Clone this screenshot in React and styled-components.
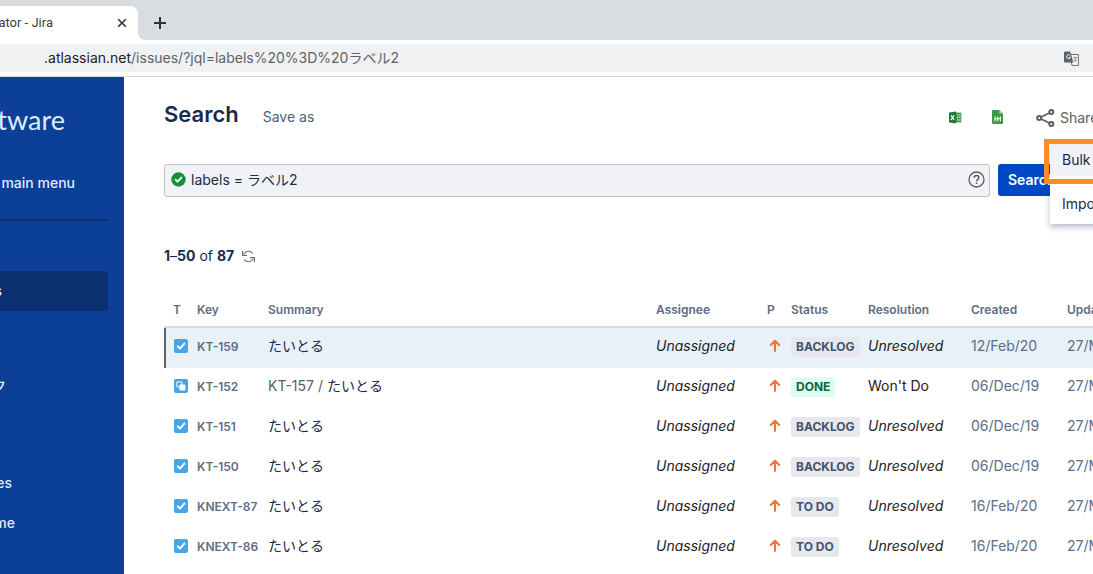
import React from "react";
import styled, { createGlobalStyle, css } from "styled-components";

const GlobalStyle = createGlobalStyle`
  * {
    box-sizing: border-box;
  }

  body {
    margin: 0;
    background-color: #ffffff;
    color: #172b4d;
    font-family: Inter, "Noto Sans CJK JP", sans-serif;
    font-size: 14px;
    line-height: 20px;
    overflow: hidden;
  }

  button,
  input {
    font: inherit;
  }

  svg {
    display: block;
    flex: none;
  }
`;

const Browser = styled.div`
  display: flex;
  flex-direction: column;
  min-height: 100vh;
  overflow: hidden;
`;

const TabStrip = styled.div`
  display: flex;
  align-items: flex-end;
  height: 40px;
  background-color: #d9dce1;
`;

const Tab = styled.div`
  position: relative;
  display: flex;
  align-items: center;
  justify-content: space-between;
  width: 138px;
  height: 34px;
  padding-right: 9px;
  background-color: #ffffff;
  border-radius: 0 8px 0 0;

  /* curved foot of the tab */
  &::after {
    content: "";
    position: absolute;
    left: 100%;
    bottom: 0;
    width: 8px;
    height: 8px;
    background: radial-gradient(circle at 100% 0, transparent 8px, #ffffff 8px);
  }
`;

const IconButton = styled.button`
  display: flex;
  align-items: center;
  justify-content: center;
  flex: none;
  width: ${(props) => props.$size || 14}px;
  height: ${(props) => props.$size || 14}px;
  padding: 0;
  border: none;
  background: none;
  color: ${(props) => props.$color || "#2f3338"};
`;

const NewTab = styled.div`
  align-self: center;
  margin: 6px 0 0 15px;
`;

// Text that runs off the left edge of the window and ends at $end
const Clipped = styled.span`
  display: flex;
  justify-content: flex-end;
  flex: none;
  width: ${(props) => props.$end}px;
  overflow: hidden;
  white-space: nowrap;
`;

const TabTitle = styled(Clipped)`
  font-family: Roboto, sans-serif;
  font-size: 13px;
  color: #3c4043;
`;

const Toolbar = styled.div`
  padding: 4px 0;
  border-bottom: 1px solid #d5d7db;
`;

const AddressBar = styled.div`
  display: flex;
  align-items: center;
  height: 28px;
  padding: 0 14px 0 44px;
  background-color: #f0f1f3;
  color: #5f6368;
`;

const Host = styled.span`
  color: #202124;
`;

const Url = styled.span`
  flex: 1;
`;

const Page = styled.div`
  display: flex;
  flex: 1;
`;

const Sidebar = styled.nav`
  flex: none;
  width: 124px;
  padding: 28px 16px 0 0;
  background-color: #0c3f98;
  color: #deebff;
  font-weight: 500;
`;

const Brand = styled(Clipped)`
  font-family: Lato, sans-serif;
  font-size: 27px;
  font-weight: 400;
  line-height: 30px;
`;

const SidebarLink = styled.a`
  display: flex;
  align-items: center;
  height: 40px;
  margin-top: ${(props) => props.$gap || 0}px;
  border-radius: 0 4px 4px 0;
  color: inherit;
  text-decoration: none;
  ${(props) =>
    props.$active &&
    css`
      background-color: #0a306f;
    `}
`;

const Divider = styled.hr`
  height: 2px;
  margin: 16px 0 50px;
  border: none;
  background-color: #0a306f;
`;

const Main = styled.main`
  flex: 1;
  min-width: 0;
  padding: 21px 0 0 40px;
`;

const Header = styled.header`
  display: flex;
  align-items: center;
  height: 32px;
`;

const Title = styled.h1`
  margin: 0;
  font-size: 22px;
  font-weight: 600;
  line-height: 32px;
`;

const PlainButton = styled.button`
  display: flex;
  align-items: center;
  gap: 5px;
  flex: none;
  padding: 0;
  border: none;
  background: none;
  color: #505f79;
`;

const SaveAs = styled(PlainButton)`
  margin: 6px auto 0 24px;
`;

const Actions = styled.div`
  position: relative;
  display: flex;
  align-items: center;
  gap: 29px;
  width: 145px;
  margin-top: 6px;
`;

const Share = styled(PlainButton)`
  margin-left: 2px;
  padding-top: 2px;
  color: #5e5e5e;
`;

const Menu = styled.ul`
  position: absolute;
  top: 38px;
  left: 102px;
  z-index: 1;
  width: 162px;
  margin: 0;
  padding: 0 0 4px;
  list-style: none;
  background-color: #ffffff;
  box-shadow: 0 3px 6px rgba(9, 30, 66, 0.3);
`;

const MenuItem = styled.li`
  height: ${(props) => (props.$active ? 32 : 44)}px;
  display: flex;
  align-items: center;
  padding-left: 12px;
  background-color: ${(props) => (props.$active ? "#f1f2f6" : "#ffffff")};

  & + & {
    padding-top: 12px;
  }
`;

const MenuButton = styled(PlainButton)`
  color: #172b4d;
`;

const Highlight = styled.div`
  position: absolute;
  top: 33px;
  left: 96px;
  z-index: 2;
  width: 178px;
  height: 45px;
  border: 5px solid #ff8b22;
`;

const SearchForm = styled.form`
  display: flex;
  gap: 8px;
  margin-top: 34px;
`;

const QueryBox = styled.div`
  display: flex;
  align-items: center;
  flex: 1;
  gap: 5px;
  height: 33px;
  padding: 0 4px 2px 6px;
  border: 1px solid #c1c1c1;
  border-radius: 3px;
  background-color: #f1f2f6;
`;

const QueryInput = styled.input`
  flex: 1;
  min-width: 0;
  padding: 0;
  border: none;
  outline: none;
  background: none;
  color: #172b4d;
`;

const SearchButton = styled.button`
  flex: none;
  width: 95px;
  height: 32px;
  padding: 0 10px;
  border: none;
  border-radius: 3px;
  background-color: #0049c4;
  color: #ffffff;
  font-weight: 600;
  text-align: left;
`;

const Count = styled.div`
  display: flex;
  align-items: center;
  gap: 7px;
  margin: 49px 0 31px;
`;

const Table = styled.table`
  width: calc(100% + 54px);
  table-layout: fixed;
  border-collapse: separate;
  border-spacing: 0;
`;

const Col = styled.col`
  width: ${(props) => props.$width}px;
`;

const Th = styled.th`
  height: 31px;
  padding: ${(props) => (props.$first ? "0 0 6px 9px" : "0 0 6px")};
  border-bottom: 2px solid #d9dde3;
  color: #5e6c84;
  font-size: 12px;
  font-weight: 600;
  line-height: 20px;
  text-align: left;
  vertical-align: bottom;
  white-space: nowrap;
`;

const Row = styled.tr`
  ${(props) =>
    props.$selected &&
    css`
      background-color: #e8f0f8;
      box-shadow: inset 2px 0 0 #5f6368;
    `}
`;

const Td = styled.td`
  height: 40px;
  padding: 0 0 4px;
  color: ${(props) => props.$color || "#172b4d"};
  white-space: nowrap;
`;

const TypeCell = styled(Td)`
  padding-left: 10px;
`;

const PriorityCell = styled(Td)`
  padding-left: 2px;
`;

const StatusCell = styled(Td)`
  padding-bottom: 2px;
`;

const KeyLink = styled.a`
  color: #5e6c84;
  font-size: 12px;
  font-weight: 600;
  text-decoration: none;
`;

const SummaryLink = styled.a`
  color: ${(props) => (props.$parent ? "#5e5e5e" : "#172b4d")};
  text-decoration: none;
`;

const Lozenge = styled.span`
  display: block;
  width: max-content;
  padding: 0 5px;
  border-radius: 3px;
  background-color: ${(props) => (props.$done ? "#dffcf0" : "#e6e8ed")};
  color: ${(props) => (props.$done ? "#0b6644" : "#42526e")};
  font-size: 12px;
  font-weight: 700;
`;

const CheckType = () => (
  <svg width="14" height="14" viewBox="0 0 14 14">
    <rect width="14" height="14" rx="2" fill="#45a5e6" />
    <path
      d="M3.8 7.4l2.2 2.2 4.3-5"
      fill="none"
      stroke="#fff"
      strokeWidth="2"
      strokeLinecap="round"
      strokeLinejoin="round"
    />
  </svg>
);

const SubtaskType = () => (
  <svg width="14" height="14" viewBox="0 0 14 14">
    <rect width="14" height="14" rx="2" fill="#45a5e6" />
    <rect
      x="2.8"
      y="2.8"
      width="5"
      height="5"
      rx="0.8"
      fill="none"
      stroke="#d5ebfa"
      strokeWidth="1.3"
    />
    <rect x="5.4" y="5.4" width="6" height="6" rx="1" fill="#fff" />
  </svg>
);

const PriorityArrow = () => (
  <svg width="12" height="14" viewBox="0 0 12 14">
    <path
      d="M6 12V2.4M1.8 6L6 1.8 10.2 6"
      fill="none"
      stroke="#ed7430"
      strokeWidth="2"
      strokeLinecap="round"
      strokeLinejoin="round"
    />
  </svg>
);

const CloseIcon = () => (
  <svg width="10" height="10" viewBox="0 0 10 10">
    <path d="M1.2 1.2l7.6 7.6M8.8 1.2L1.2 8.8" stroke="currentColor" strokeWidth="1.6" />
  </svg>
);

const PlusIcon = () => (
  <svg width="14" height="14" viewBox="0 0 14 14">
    <path d="M7 1v12M1 7h12" stroke="currentColor" strokeWidth="2" />
  </svg>
);

const TranslateIcon = () => (
  <svg width="15" height="15" viewBox="0 0 15 15">
    <path d="M6 3.5h8.4v10.9H8z" fill="#f8f8f9" stroke="#6b6f74" strokeWidth="1" />
    <path d="M1 .5h5.2l3.2 11H1a1 1 0 0 1-1-1v-9a1 1 0 0 1 1-1z" fill="#5f6368" />
    <path
      d="M6.2 4.5a2 2 0 1 0 .3 1.8H4.7"
      fill="none"
      stroke="#f0f1f3"
      strokeWidth="1"
    />
    <path
      d="M9 6.7h4.2M11 5.7v1M12.5 6.9c-.4 1.6-1.4 2.9-2.8 3.8M10 8c.6 1.2 1.4 2.1 2.6 2.8"
      fill="none"
      stroke="#6b6f74"
      strokeWidth=".8"
    />
  </svg>
);

const ExcelIcon = () => (
  <svg width="13" height="13" viewBox="0 0 13 13">
    <rect x="6" y="1.6" width="6.4" height="9.8" fill="#3d9a52" />
    <path
      d="M8 3.8h1.3M10.2 3.8h1.3M8 6.4h1.3M10.2 6.4h1.3M8 9h1.3M10.2 9h1.3"
      stroke="#d7ecdb"
      strokeWidth="1.3"
    />
    <path d="M0 1.6L7.2.4v12.2L0 11.4z" fill="#1f7a3a" />
    <path d="M2.1 4.4l3 4.4M5.1 4.4l-3 4.4" stroke="#fff" strokeWidth="1.2" />
  </svg>
);

const SheetIcon = () => (
  <svg width="12" height="14" viewBox="0 0 12 14">
    <path d="M1 0h6.4L11 3.6V13a1 1 0 0 1-1 1H1a1 1 0 0 1-1-1V1a1 1 0 0 1 1-1z" fill="#3b9a45" />
    <path d="M7.4 0v3.6H11z" fill="#a6d5aa" />
    <path d="M3 6.4v4.8M5.7 6.4v4.8M8.4 6.4v4.8M3 8.8h5.4" stroke="#fff" strokeWidth="1.1" />
  </svg>
);

const ShareIcon = () => (
  <svg width="19" height="18" viewBox="0 0 19 18" fill="none" stroke="#5e5e5e" strokeWidth="2">
    <path d="M5 8.1l8.4-4.2M5 9.9l8.4 4.2" strokeWidth="1.7" />
    <circle cx="3.2" cy="9" r="2" />
    <circle cx="15.3" cy="3" r="2" />
    <circle cx="15.3" cy="15" r="2" />
  </svg>
);

const ValidIcon = () => (
  <svg width="15" height="15" viewBox="0 0 15 15">
    <circle cx="7.5" cy="7.5" r="7.2" fill="#148f3d" />
    <path
      d="M4.6 7.6l2 2 3.8-4"
      fill="none"
      stroke="#fff"
      strokeWidth="2"
      strokeLinecap="round"
      strokeLinejoin="round"
    />
  </svg>
);

const HelpIcon = () => (
  <svg width="17" height="17" viewBox="0 0 17 17" fill="none" stroke="#5e5e5e">
    <circle cx="8.5" cy="8.5" r="7.5" strokeWidth="1.3" />
    <path
      d="M6.2 6.8c0-1.5 1-2.3 2.3-2.3s2.3.8 2.3 2.1c0 1.7-2.2 1.8-2.2 3.6"
      strokeWidth="1.5"
    />
    <path d="M8.6 11.3v1.6" strokeWidth="1.6" />
  </svg>
);

const RefreshIcon = () => (
  <svg width="13" height="13" viewBox="0 0 13 13">
    <path
      d="M2 4A5.2 5.2 0 0 1 10.8 3.4M11 9A5.2 5.2 0 0 1 2.2 9.6"
      fill="none"
      stroke="#6b6b6b"
      strokeWidth="1.1"
    />
    <path d="M.6 1v4.4H5M12.4 12V7.6H8" fill="none" stroke="#6b6b6b" strokeWidth="1.2" />
  </svg>
);

const columns = [
  { label: "T", width: 33 },
  { label: "Key", width: 71 },
  { label: "Summary" },
  { label: "Assignee", width: 111 },
  { label: "P", width: 24 },
  { label: "Status", width: 77 },
  { label: "Resolution", width: 103 },
  { label: "Created", width: 96 },
  { label: "Updated", width: 80 },
];

const issues = [
  { key: "KT-159", status: "BACKLOG", created: "12/Feb/20", selected: true },
  { key: "KT-152", parent: "KT-157", status: "DONE", resolution: "Won't Do", created: "06/Dec/19" },
  { key: "KT-151", status: "BACKLOG", created: "06/Dec/19" },
  { key: "KT-150", status: "BACKLOG", created: "06/Dec/19" },
  { key: "KNEXT-87", status: "TO DO", created: "16/Feb/20" },
  { key: "KNEXT-86", status: "TO DO", created: "16/Feb/20" },
];

const IssueRow = ({ issue }) => (
  <Row $selected={issue.selected}>
    <TypeCell>{issue.parent ? <SubtaskType /> : <CheckType />}</TypeCell>
    <Td>
      <KeyLink href="#">{issue.key}</KeyLink>
    </Td>
    <Td>
      {issue.parent && (
        <SummaryLink href="#" $parent>
          {issue.parent} /{" "}
        </SummaryLink>
      )}
      <SummaryLink href="#">たいとる</SummaryLink>
    </Td>
    <Td $color="#222222">
      <em>Unassigned</em>
    </Td>
    <PriorityCell>
      <PriorityArrow />
    </PriorityCell>
    <StatusCell>
      <Lozenge $done={issue.status === "DONE"}>{issue.status}</Lozenge>
    </StatusCell>
    <Td $color="#222222">{issue.resolution || <em>Unresolved</em>}</Td>
    <Td $color="#5e6c84">{issue.created}</Td>
    <Td $color="#5e6c84">27/Mar/20</Td>
  </Row>
);

const App = () => {
  return (
    <Browser>
      <GlobalStyle />
      <TabStrip>
        <Tab>
          <TabTitle $end={53}>ator - Jira</TabTitle>
          <IconButton aria-label="Close tab">
            <CloseIcon />
          </IconButton>
        </Tab>
        <NewTab>
          <IconButton aria-label="New tab">
            <PlusIcon />
          </IconButton>
        </NewTab>
      </TabStrip>
      <Toolbar>
        <AddressBar>
          <Url>
            <Host>.atlassian.net</Host>/issues/?jql=labels%20%3D%20ラベル2
          </Url>
          <IconButton aria-label="Translate" $size={15}>
            <TranslateIcon />
          </IconButton>
        </AddressBar>
      </Toolbar>
      <Page>
        <Sidebar>
          <Brand $end={65}>tware</Brand>
          <SidebarLink href="#" $gap={28}>
            <Clipped $end={75}>main menu</Clipped>
          </SidebarLink>
          <Divider />
          <SidebarLink href="#" $active>
            <Clipped $end={2}>s</Clipped>
          </SidebarLink>
          <SidebarLink href="#" $gap={55}>
            <Clipped $end={6}>ク</Clipped>
          </SidebarLink>
          <SidebarLink href="#" $gap={57}>
            <Clipped $end={12}>es</Clipped>
          </SidebarLink>
          <SidebarLink href="#">
            <Clipped $end={15}>me</Clipped>
          </SidebarLink>
        </Sidebar>
        <Main>
          <Header>
            <Title>Search</Title>
            <SaveAs>Save as</SaveAs>
            <Actions>
              <IconButton aria-label="Open in Excel">
                <ExcelIcon />
              </IconButton>
              <IconButton aria-label="Open in Sheets">
                <SheetIcon />
              </IconButton>
              <Share>
                <ShareIcon />
                Share
              </Share>
              <Menu>
                <MenuItem $active>
                  <MenuButton>Bulk change</MenuButton>
                </MenuItem>
                <MenuItem>
                  <MenuButton>Import issues</MenuButton>
                </MenuItem>
              </Menu>
              <Highlight />
            </Actions>
          </Header>
          <SearchForm onSubmit={(e) => e.preventDefault()}>
            <QueryBox>
              <ValidIcon />
              <QueryInput aria-label="Query" defaultValue="labels = ラベル2" />
              <IconButton type="button" aria-label="Syntax help" $size={17}>
                <HelpIcon />
              </IconButton>
            </QueryBox>
            <SearchButton>Search</SearchButton>
          </SearchForm>
          <Count>
            <span>
              <b>1</b>–<b>50</b> of <b>87</b>
            </span>
            <IconButton aria-label="Refresh results">
              <RefreshIcon />
            </IconButton>
          </Count>
          <Table>
            <colgroup>
              {columns.map((column) => (
                <Col key={column.label} $width={column.width} />
              ))}
            </colgroup>
            <thead>
              <tr>
                {columns.map((column, i) => (
                  <Th key={column.label} $first={i === 0}>
                    {column.label}
                  </Th>
                ))}
              </tr>
            </thead>
            <tbody>
              {issues.map((issue) => (
                <IssueRow key={issue.key} issue={issue} />
              ))}
            </tbody>
          </Table>
        </Main>
      </Page>
    </Browser>
  );
};

export default App;
